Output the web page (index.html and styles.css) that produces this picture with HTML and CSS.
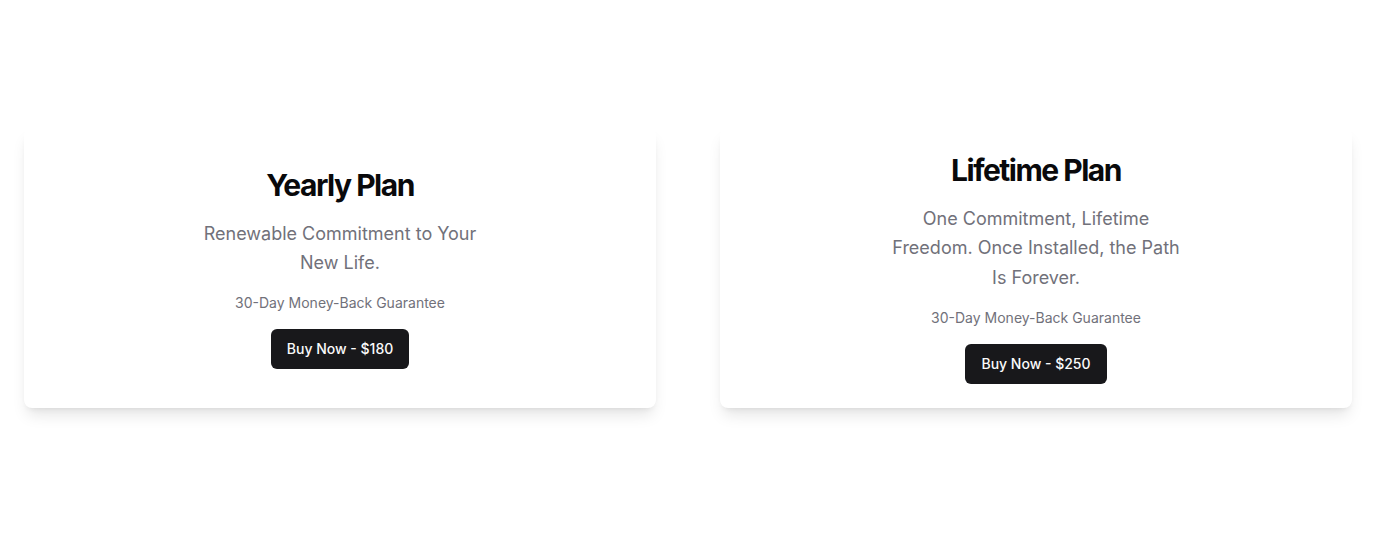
FILE: index.html
```html
<!DOCTYPE html>
<html lang="en">
<head>
<meta charset="utf-8">
<title>Plans</title>
<link rel="stylesheet" href="styles.css">
</head>
<body>
<main class="page">
  <section class="plans">
    <article class="card">
      <h2 class="title">Yearly Plan</h2>
      <p class="desc">Renewable Commitment to Your New Life.</p>
      <p class="note">30-Day Money-Back Guarantee</p>
      <button class="buy">Buy Now - $180</button>
    </article>
    <article class="card">
      <h2 class="title">Lifetime Plan</h2>
      <p class="desc">One Commitment, Lifetime Freedom. Once Installed, the Path Is Forever.</p>
      <p class="note">30-Day Money-Back Guarantee</p>
      <button class="buy">Buy Now - $250</button>
    </article>
  </section>
</main>
</body>
</html>
```

FILE: styles.css
```css
* { box-sizing: border-box; }
html, body { margin: 0; padding: 0; background: #ffffff; }
body {
  font-family: Inter, "Noto Sans", sans-serif;
  color: #09090b;
}
.page {
  min-height: 536px;
  display: flex;
  align-items: center;
  padding: 0 24px;
}
.plans {
  width: 100%;
  display: grid;
  grid-template-columns: 1fr 1fr;
  gap: 64px;
}
.card {
  background: #fff;
  border-radius: 8px;
  box-shadow: 0 10px 15px -3px rgba(0,0,0,0.1), 0 4px 6px -4px rgba(0,0,0,0.1);
  padding: 24px;
  display: flex;
  flex-direction: column;
  align-items: center;
  justify-content: center;
  gap: 16px;
  text-align: center;
}
.title {
  margin: 0;
  font-size: 30px;
  line-height: 36px;
  font-weight: 700;
  letter-spacing: -0.05em;
  color: #09090b;
}
.desc {
  margin: 0;
  max-width: 300px;
  font-size: 18px;
  line-height: 29.25px;
  color: #71717a;
}
.note {
  margin: 0;
  font-size: 14px;
  line-height: 20px;
  color: #71717a;
}
.buy {
  height: 40px;
  padding: 0 16px;
  border: none;
  border-radius: 6px;
  background: #18181b;
  color: #fafafa;
  font-family: Inter, "Noto Sans", sans-serif;
  font-size: 14px;
  font-weight: 500;
  line-height: 20px;
  cursor: pointer;
}
```
